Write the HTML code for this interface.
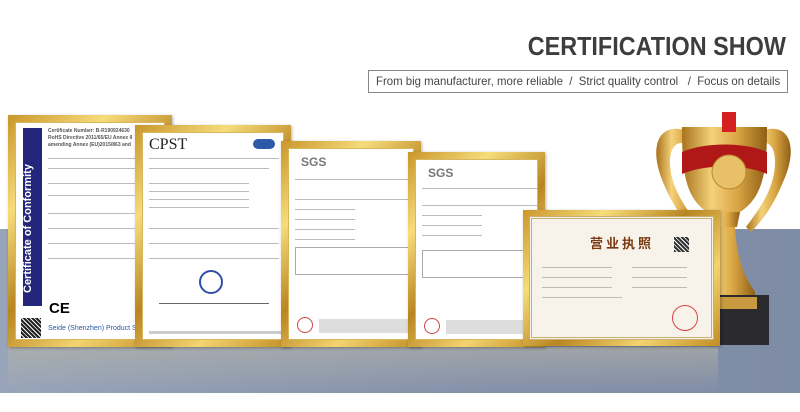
<!DOCTYPE html>
<html><head><meta charset="utf-8"><style>
*{margin:0;padding:0;box-sizing:border-box}
body{width:800px;height:412px;background:#fff;position:relative;overflow:hidden;font-family:"Liberation Sans","Noto Sans CJK SC",sans-serif}
.title{position:absolute;right:14px;top:31px;font-size:26px;font-weight:bold;color:#3d3d3d;transform:scaleX(0.9);transform-origin:right top;white-space:nowrap}
.sub{position:absolute;left:368px;top:70px;width:420px;height:23px;border:1px solid #888;font-size:12px;color:#444;line-height:21px;padding-left:7px;white-space:nowrap;overflow:hidden}
.sub span{display:inline-block;transform:scaleX(0.95);transform-origin:left center}
.band{position:absolute;left:0;top:229px;width:800px;height:164px;background:linear-gradient(90deg,#97a4b9,#8491aa 60%,#7f8ca6)}
.refl{position:absolute;top:347px;height:44px;background:linear-gradient(#b9b6a6,rgba(150,160,180,0));opacity:.55}
.cert{position:absolute;background:linear-gradient(135deg,#c9962a,#f6dc7a 25%,#b98520 50%,#f3d470 75%,#c28c22);padding:7px;box-shadow:1px 1px 3px rgba(0,0,0,.3)}
.in{width:100%;height:100%;background:#fff;position:relative;overflow:hidden;border:1px solid #d6b760}
.l{position:absolute;height:2px;background:#bbb}
.t{position:absolute;font-size:5px;color:#555;white-space:nowrap}
</style></head><body>
<div class="title">CERTIFICATION SHOW</div>
<div class="sub"><span>From big manufacturer, more reliable&nbsp; /&nbsp; Strict quality control &nbsp;&nbsp;/&nbsp; Focus on details</span></div>
<div class="band"></div>
<div class="refl" style="left:8px;width:710px"></div>

<svg style="position:absolute;left:645px;top:112px" width="155" height="235" viewBox="0 0 155 235">
<defs><linearGradient id="g" x1="0" x2="1"><stop offset="0" stop-color="#a8721c"/><stop offset=".35" stop-color="#f4d27a"/><stop offset=".65" stop-color="#d9a544"/><stop offset="1" stop-color="#8f5f15"/></linearGradient></defs>
<path d="M40 18 C10 10 5 40 18 70 C28 95 40 110 50 120 L55 115 C40 95 25 75 25 50 C25 35 32 28 42 32Z" fill="url(#g)"/>
<path d="M118 18 C148 10 152 40 138 70 C128 95 116 110 106 120 L101 115 C116 95 130 75 130 50 C130 35 124 28 114 32Z" fill="url(#g)"/>
<path d="M37 15 L122 15 C122 60 118 85 95 100 L62 100 C40 85 37 60 37 15Z" fill="url(#g)"/>
<path d="M37 40 C60 30 100 30 122 40 L122 62 C100 52 60 52 37 62Z" fill="#b01818"/>
<rect x="77" y="0" width="14" height="20" fill="#d42020"/>
<circle cx="84" cy="60" r="17" fill="#e8c068" stroke="#b88a30"/>
<path d="M62 100 L95 100 L92 115 L65 115Z" fill="url(#g)"/>
<path d="M66 115 L90 115 C92 150 100 165 110 180 L110 190 L48 190 L48 180 C58 165 64 150 66 115Z" fill="url(#g)"/>
<rect x="72" y="183" width="52" height="50" fill="#2b2b2d"/>
<rect x="48" y="185" width="64" height="12" fill="#c99a40"/>
</svg>

<div class="cert" style="left:8px;top:115px;width:164px;height:232px">
<div class="in">
<div style="position:absolute;left:7px;top:5px;width:19px;height:178px;background:#23267a"></div>
<div style="position:absolute;left:6px;top:170px;transform:rotate(-90deg);transform-origin:0 0;color:#fff;font-size:11px;font-weight:bold;white-space:nowrap">Certificate of Conformity</div>
<div class="t" style="left:32px;top:5px;font-weight:bold">Certificate Number: B-R190924630</div>
<div class="t" style="left:32px;top:12px;font-weight:bold">RoHS Directive 2011/65/EU Annex II</div>
<div class="t" style="left:32px;top:19px;font-weight:bold">amending Annex (EU)2015/863 and</div>
<div class="l" style="left:32px;top:35px;width:120px;height:1px"></div>
<div class="l" style="left:32px;top:45px;width:120px;height:1px"></div>
<div class="l" style="left:32px;top:60px;width:120px;height:1px"></div>
<div class="l" style="left:32px;top:72px;width:120px;height:1px"></div>
<div class="l" style="left:32px;top:90px;width:120px;height:1px"></div>
<div class="l" style="left:32px;top:105px;width:120px;height:1px"></div>
<div class="l" style="left:32px;top:120px;width:120px;height:1px"></div>
<div class="l" style="left:32px;top:135px;width:120px;height:1px"></div>
<div style="position:absolute;left:33px;top:177px;font-size:15px;font-weight:bold">CE</div>
<div style="position:absolute;left:120px;top:167px;width:30px;height:30px;border-radius:50%;background:#a0a828"></div>
<div style="position:absolute;left:5px;top:195px;width:20px;height:20px;background:repeating-linear-gradient(45deg,#222 0 2px,#fff 2px 3px)"></div>
<div class="t" style="left:32px;top:202px;color:#2b5aa0;font-size:7px">Seide (Shenzhen) Product Service Limi</div>
</div></div>

<div class="cert" style="left:135px;top:125px;width:156px;height:222px">
<div class="in">
<div style="position:absolute;left:6px;top:3px;font-family:'Liberation Serif',serif;font-size:16px;color:#222">CPST</div>
<div style="position:absolute;right:8px;top:6px;width:22px;height:10px;border-radius:5px;background:#2d5aa8"></div>
<div class="l" style="left:6px;top:25px;width:130px;height:1px"></div>
<div class="l" style="left:6px;top:35px;width:120px;height:1px"></div>
<div class="l" style="left:6px;top:50px;width:100px;height:1px"></div>
<div class="l" style="left:6px;top:58px;width:100px;height:1px"></div>
<div class="l" style="left:6px;top:66px;width:100px;height:1px"></div>
<div class="l" style="left:6px;top:74px;width:100px;height:1px"></div>
<div class="l" style="left:6px;top:95px;width:130px;height:1px"></div>
<div class="l" style="left:6px;top:110px;width:130px;height:1px"></div>
<div class="l" style="left:6px;top:125px;width:130px;height:1px"></div>
<div style="position:absolute;left:56px;top:137px;width:24px;height:24px;border-radius:50%;border:2px solid #3050a8"></div>
<div class="l" style="left:16px;top:170px;width:110px;height:1px;background:#666"></div>
<div class="l" style="left:6px;top:198px;width:135px;height:3px;background:#ccc"></div>
</div></div>

<div class="cert" style="left:281px;top:141px;width:140px;height:206px">
<div class="in">
<div style="position:absolute;left:12px;top:6px;font-size:12px;font-weight:bold;color:#777">SGS</div>
<div class="l" style="left:6px;top:30px;width:120px;height:1px"></div>
<div class="l" style="left:6px;top:50px;width:120px;height:1px"></div>
<div class="l" style="left:6px;top:60px;width:60px;height:1px"></div>
<div class="l" style="left:6px;top:70px;width:60px;height:1px"></div>
<div class="l" style="left:6px;top:80px;width:60px;height:1px"></div>
<div class="l" style="left:6px;top:90px;width:60px;height:1px"></div>
<div style="position:absolute;left:6px;top:98px;width:120px;height:28px;border:1px solid #aaa"></div>
<div style="position:absolute;left:8px;top:168px;width:16px;height:16px;border-radius:50%;border:1px solid #c44"></div>
<div style="position:absolute;left:30px;top:170px;width:100px;height:14px;background:#ddd"></div>
</div></div>

<div class="cert" style="left:408px;top:152px;width:137px;height:195px">
<div class="in">
<div style="position:absolute;left:12px;top:6px;font-size:12px;font-weight:bold;color:#777">SGS</div>
<div class="l" style="left:6px;top:28px;width:115px;height:1px"></div>
<div class="l" style="left:6px;top:45px;width:115px;height:1px"></div>
<div class="l" style="left:6px;top:55px;width:60px;height:1px"></div>
<div class="l" style="left:6px;top:65px;width:60px;height:1px"></div>
<div class="l" style="left:6px;top:75px;width:60px;height:1px"></div>
<div style="position:absolute;left:6px;top:90px;width:115px;height:28px;border:1px solid #aaa"></div>
<div style="position:absolute;left:108px;top:130px;width:12px;height:14px;background:repeating-linear-gradient(90deg,#333 0 1px,#fff 1px 2px)"></div>
<div style="position:absolute;left:8px;top:158px;width:16px;height:16px;border-radius:50%;border:1px solid #c44"></div>
<div style="position:absolute;left:30px;top:160px;width:85px;height:14px;background:#ddd"></div>
</div></div>

<div class="cert" style="left:523px;top:210px;width:197px;height:136px;padding:6px">
<div class="in" style="background:#f7f2ea;border:3px double #c8b070">
<div style="position:absolute;left:58px;top:14px;font-size:13px;font-weight:bold;color:#7a3a12;letter-spacing:3px">营业执照</div>
<div style="position:absolute;left:142px;top:18px;width:15px;height:15px;background:repeating-linear-gradient(45deg,#333 0 2px,#fff 2px 3px)"></div>
<div class="l" style="left:10px;top:48px;width:70px;height:1px"></div>
<div class="l" style="left:10px;top:58px;width:70px;height:1px"></div>
<div class="l" style="left:10px;top:68px;width:70px;height:1px"></div>
<div class="l" style="left:10px;top:78px;width:80px;height:1px"></div>
<div class="l" style="left:100px;top:48px;width:55px;height:1px"></div>
<div class="l" style="left:100px;top:58px;width:55px;height:1px"></div>
<div class="l" style="left:100px;top:68px;width:55px;height:1px"></div>
<div style="position:absolute;left:140px;top:86px;width:26px;height:26px;border-radius:50%;border:1px solid #d44"></div>
</div></div>
</body></html>
